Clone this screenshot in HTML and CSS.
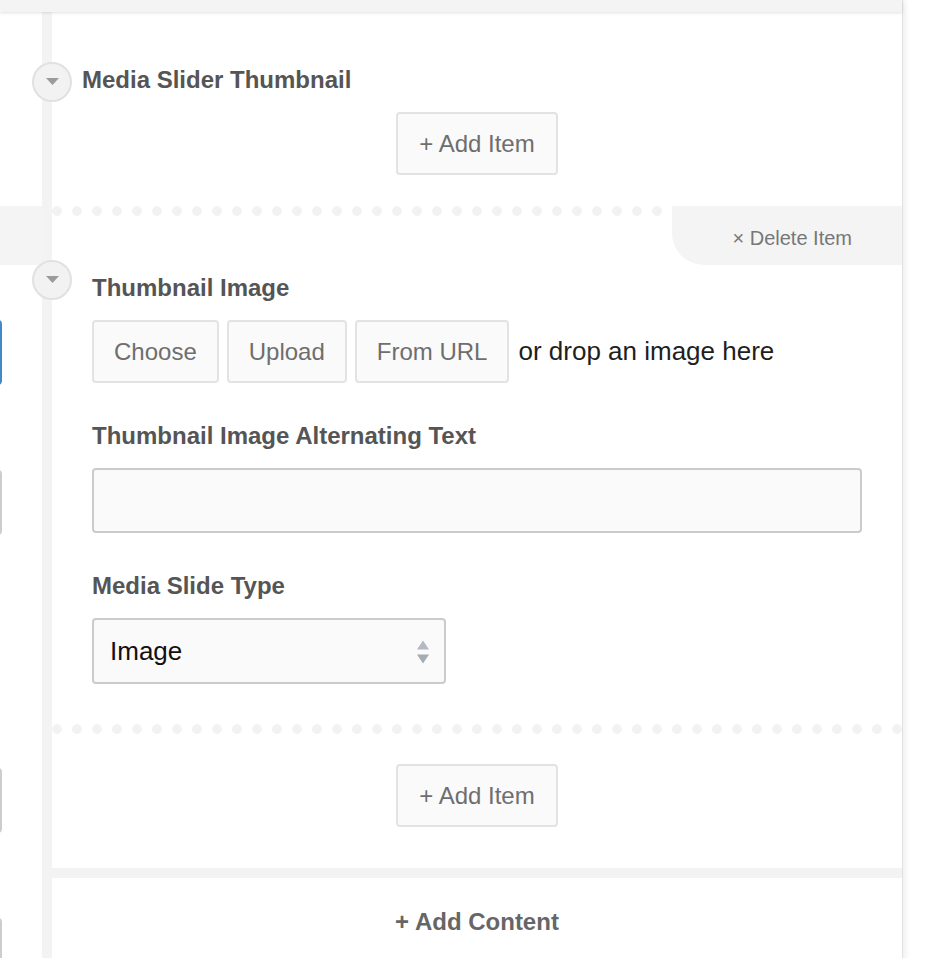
FILE: index.html
```html
<!DOCTYPE html>
<html lang="en">
  <head>
    <meta charset="UTF-8" />
    <meta name="viewport" content="width=device-width, initial-scale=1.0" />
    <title>Media Slider Thumbnail</title>

    <link rel="stylesheet" href="styles.css">
  </head>
  <body>
    <div class="panel">
      <div class="panel-top"></div>

      <div class="panel-body">
        <!-- parent form, cut off on the left -->
        <div class="outer-col">
          <div class="outer-band"></div>
          <div class="outer-input outer-input--focus"></div>
          <div class="outer-input outer-input--2"></div>
          <div class="outer-input outer-input--3"></div>
          <div class="outer-input outer-input--4"></div>
        </div>

        <div class="repeater">
          <div class="group-head">
            <button class="toggle" type="button">
              <svg width="13" height="7" viewBox="0 0 13 7"><path d="M0 0H13L6.5 7Z" fill="#9b9b9b" /></svg>
            </button>
            <h3 class="group-title">Media Slider Thumbnail</h3>
          </div>

          <div class="add-row">
            <button class="btn btn-add" type="button">+ Add Item</button>
          </div>

          <div class="item">
            <div class="dots"></div>
            <a href="#" class="delete-tab">× Delete Item</a>
            <button class="toggle toggle--item" type="button">
              <svg width="13" height="7" viewBox="0 0 13 7"><path d="M0 0H13L6.5 7Z" fill="#9b9b9b" /></svg>
            </button>

            <div class="item-body">
              <div class="field">
                <label class="field-label">Thumbnail Image</label>
                <div class="uploader">
                  <button class="btn" type="button">Choose</button>
                  <button class="btn" type="button">Upload</button>
                  <button class="btn" type="button">From URL</button>
                  <span class="drop-text">or drop an image here</span>
                </div>
              </div>

              <div class="field">
                <label class="field-label">Thumbnail Image Alternating Text</label>
                <input class="text-input" type="text" />
              </div>

              <div class="field">
                <label class="field-label">Media Slide Type</label>
                <div class="select-wrap">
                  <select class="select">
                    <option>Image</option>
                    <option>Video</option>
                  </select>
                  <svg class="select-arrows" width="14" height="24" viewBox="0 0 14 24">
                    <path d="M1 9.5L7 0.5L13 9.5Z" fill="#b3bac1" />
                    <path d="M1 14.5H13L7 23.5Z" fill="#a3abb3" />
                  </svg>
                </div>
              </div>
            </div>
          </div>

          <div class="dots"></div>

          <div class="add-row add-row--bottom">
            <button class="btn btn-add" type="button">+ Add Item</button>
          </div>

          <div class="gap-band"></div>

          <div class="add-content">+ Add Content</div>
        </div>
      </div>
    </div>
  </body>
</html>
```

FILE: styles.css
```css
html,
body {
  margin: 0;
  height: 100%;
  background: #fff;
  overflow: hidden;
}

body {
  font-family: "Liberation Sans", Arial, sans-serif;
  font-size: 24px;
  color: #555;
}

.panel {
  width: 902px;
  min-height: 100%;
  display: flex;
  flex-direction: column;
  background: #fff;
  box-shadow: 1px 0 0 #e2e2e2, 3px 0 6px rgba(0, 0, 0, 0.08);
}

.panel-top {
  height: 12px;
  background: #f4f4f4;
  box-shadow: 0 1px 3px rgba(0, 0, 0, 0.12);
  position: relative;
  z-index: 1;
}

.panel-body {
  flex: 1;
  display: flex;
}

/* left column: bits of the parent form */
.outer-col {
  width: 42px;
  flex-shrink: 0;
  display: flex;
  flex-direction: column;
}

.outer-band {
  margin-top: 194px;
  height: 59px;
  background: #f4f4f4;
}

.outer-input {
  box-sizing: border-box;
  margin-left: -40px;
  width: 42px;
  height: 65px;
  border: 2px solid #cdcdcd;
  border-radius: 4px;
  background: #fafafa;
}

.outer-input--focus {
  margin-top: 55px;
  border-color: #4489c7;
}

.outer-input--2 {
  margin-top: 85px;
}

.outer-input--3 {
  margin-top: 233px;
}

.outer-input--4 {
  margin-top: 85px;
}

/* repeater */
.repeater {
  flex: 1;
  border-left: 10px solid #f3f3f3;
  display: flex;
  flex-direction: column;
}

.group-head {
  margin-top: 50px;
  height: 40px;
  display: flex;
  align-items: center;
}

.toggle {
  box-sizing: border-box;
  width: 40px;
  height: 40px;
  margin-left: -20px;
  padding: 0;
  border: 2px solid #e1e1e1;
  border-radius: 50%;
  background: #f2f2f2;
  display: flex;
  align-items: center;
  justify-content: center;
}

.toggle svg {
  display: block;
  flex-shrink: 0;
  margin-top: -1px;
}

.group-title {
  align-self: flex-start;
  margin: 0 0 0 10px;
  font-size: 24px;
  line-height: 36px;
  font-weight: bold;
  color: #555;
}

.add-row {
  margin-top: 10px;
  display: flex;
  justify-content: center;
}

.add-row--bottom {
  margin-top: 30px;
}

.btn {
  box-sizing: border-box;
  height: 63px;
  padding: 0 20px;
  border: 2px solid #e3e3e3;
  border-radius: 4px;
  background: #fafafa;
  font-family: inherit;
  font-size: 24px;
  line-height: 35px;
  color: #6e6e6e;
}

.btn-add {
  padding: 0 21px;
}

.item {
  position: relative;
  margin-top: 31px;
}

.dots {
  height: 10px;
  background-image: radial-gradient(circle at 5px 5px, #f2f2f2 4.5px, transparent 5.2px);
  background-size: 20px 10px;
  background-repeat: repeat-x;
}

.delete-tab {
  position: absolute;
  top: 0;
  right: 0;
  box-sizing: border-box;
  width: 230px;
  height: 59px;
  padding: 5px 50px 0 0;
  background: #f4f4f4;
  border-bottom-left-radius: 32px;
  display: flex;
  align-items: center;
  justify-content: flex-end;
  font-size: 20px;
  color: #777;
  text-decoration: none;
}

.toggle--item {
  position: absolute;
  top: 54px;
  left: 0;
}

.item-body {
  padding: 55px 40px 40px;
}

.field + .field {
  margin-top: 36px;
}

.field-label {
  display: block;
  margin-bottom: 15px;
  font-size: 24px;
  line-height: 34px;
  font-weight: bold;
  color: #555;
}

.uploader {
  display: flex;
  align-items: center;
  gap: 8px;
}

.drop-text {
  margin-left: 1px;
  font-size: 26px;
  color: #1d1f21;
}

.text-input {
  box-sizing: border-box;
  display: block;
  width: 100%;
  height: 65px;
  margin: 0;
  border: 2px solid #cbcbcb;
  border-radius: 4px;
  background: #fafafa;
  font-family: inherit;
  font-size: 24px;
}

.select-wrap {
  position: relative;
  width: 354px;
}

.select {
  box-sizing: border-box;
  display: block;
  width: 100%;
  height: 66px;
  margin: 0;
  padding: 0 40px 0 16px;
  border: 2px solid #cbcbcb;
  border-radius: 4px;
  background: #fafafa;
  appearance: none;
  -webkit-appearance: none;
  font-family: inherit;
  font-size: 26px;
  color: #111;
}

.select-arrows {
  position: absolute;
  top: 22px;
  right: 16px;
}

.gap-band {
  margin-top: 41px;
  height: 10px;
  background: #f3f3f3;
}

.add-content {
  padding-top: 27px;
  text-align: center;
  font-size: 24px;
  line-height: 34px;
  font-weight: bold;
  color: #666;
}
```
